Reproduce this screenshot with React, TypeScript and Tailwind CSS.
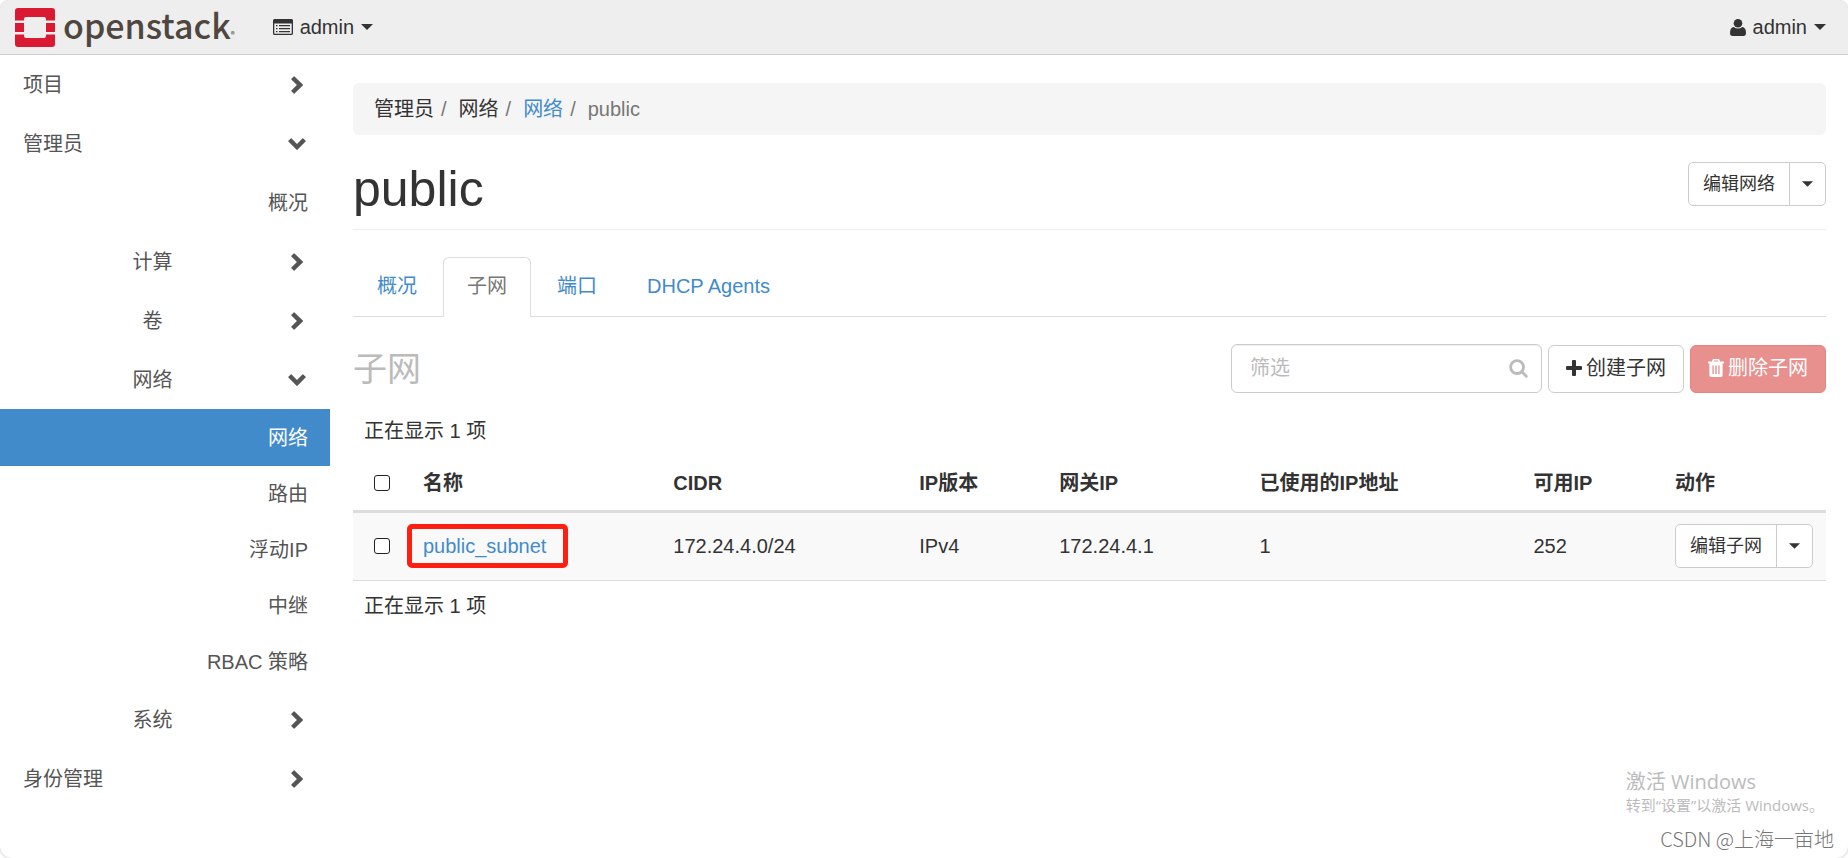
import { useState } from "react";
import type { ReactNode } from "react";
import clsx from "clsx";

const leaves = ["网络", "路由", "浮动IP", "中继", "RBAC 策略"];

const columns = ["名称", "CIDR", "IP版本", "网关IP", "已使用的IP地址", "可用IP", "动作"];

const tabs = ["概况", "子网", "端口", "DHCP Agents"];

function Caret({ className = "w-3" }: { className?: string }) {
  return (
    <svg viewBox="0 0 12 6" className={clsx("h-1.5 shrink-0", className)} fill="currentColor" aria-hidden="true">
      <path d="M0 0h12L6 6z" />
    </svg>
  );
}

function Chevron({ open }: { open: boolean }) {
  return (
    <svg
      viewBox="0 0 18 18"
      className={clsx("size-[18px] shrink-0", open && "rotate-90")}
      fill="currentColor"
      aria-hidden="true"
    >
      <path d="M3.400 2.800 5.700.4Q6.100 0 6.500.4L14.800 8.600Q15.200 9 14.800 9.400L6.500 17.600Q6.100 18 5.700 17.600L3.400 15.200Q3 14.800 3.400 14.400L8.900 9 3.400 3.600Q3 3.200 3.400 2.800z" />
    </svg>
  );
}

function Logo() {
  return (
    <svg viewBox="0 0 40 39" className="h-[39px] w-10 shrink-0" aria-hidden="true">
      <path fill="#da1a32" d="M3 0h34a3 3 0 0 1 3 3v9.500h-9V11a2 2 0 0 0-2-2H11a2 2 0 0 0-2 2v1.500H0V3a3 3 0 0 1 3-3z" />
      <path fill="#da1a32" d="M0 15h9v9H0zM31 15h9v9h-9z" />
      <path fill="#da1a32" d="M0 26.500h9V28a2 2 0 0 0 2 2h18a2 2 0 0 0 2-2v-1.500h9V36a3 3 0 0 1-3 3H3a3 3 0 0 1-3-3z" />
    </svg>
  );
}

function ListIcon() {
  return (
    <svg viewBox="0 0 20 16" className="h-4 w-5 shrink-0" aria-hidden="true">
      <path
        fill="currentColor"
        fillRule="evenodd"
        d="M1.500 0h17A1.500 1.500 0 0 1 20 1.500v13a1.500 1.500 0 0 1-1.500 1.500h-17A1.500 1.500 0 0 1 0 14.500v-13A1.500 1.500 0 0 1 1.500 0zM1.300 4.500v9.700q0 .5.5.5h16.400q.5 0 .5-.5V4.500z"
      />
      <path fill="currentColor" d="M3 6h1.500v1.200H3zM6 6h11v1.200H6zM3 9h1.500v1.200H3zM6 9h11v1.200H6zM3 12h1.500v1.200H3zM6 12h11v1.200H6z" />
    </svg>
  );
}

function UserIcon() {
  return (
    <svg viewBox="0 0 16 17" className="h-[17px] w-4 shrink-0" fill="currentColor" aria-hidden="true">
      <circle cx="8" cy="4.300" r="4.300" />
      <path d="M3.800 8Q5.500 9.600 8 9.600T12.200 8Q16 8.400 16 14q0 3-2.600 3H2.600Q0 17 0 14 0 8.400 3.800 8z" />
    </svg>
  );
}

function SearchIcon() {
  return (
    <svg viewBox="0 0 20 20" className="size-[19px]" fill="none" stroke="currentColor" strokeWidth="3" aria-hidden="true">
      <circle cx="8.500" cy="8.500" r="6.800" />
      <path d="m13.500 13.500 4.700 4.700" strokeLinecap="round" />
    </svg>
  );
}

function PlusIcon() {
  return (
    <svg viewBox="0 0 16 16" className="size-4 shrink-0" fill="currentColor" aria-hidden="true">
      <path d="M7 0h2q1 0 1 1v5h5q1 0 1 1v2q0 1-1 1h-5v5q0 1-1 1H7q-1 0-1-1v-5H1q-1 0-1-1V7q0-1 1-1h5V1q0-1 1-1z" />
    </svg>
  );
}

function TrashIcon() {
  return (
    <svg viewBox="0 0 16 18" className="h-[18px] w-4 shrink-0" fill="currentColor" aria-hidden="true">
      <path
        fillRule="evenodd"
        d="M5.500 0h5q.8 0 1 .8l.6 1.700H15.500q.5 0 .5.500v1q0 .5-.5.500H14.600V16q0 2-1.600 2H3q-1.600 0-1.600-2V4.500H.5Q0 4.500 0 4V3q0-.5.5-.5H3.900L4.500.8q.2-.8 1-.8zM5.700 2.500h4.600L9.900 1.400H6.100zM4.400 6.500v8.500h1.300V6.500zM7.300 6.500v8.500h1.400V6.500zM10.300 6.500v8.500h1.300V6.500z"
      />
    </svg>
  );
}

function NavPanel({
  label,
  nested,
  open = false,
  children
}: {
  label: string;
  nested?: boolean;
  open?: boolean;
  children?: ReactNode;
}) {
  const [isOpen, setIsOpen] = useState(open);

  return (
    <li>
      <button
        type="button"
        className="flex h-[59px] w-full items-center pr-6 pl-[23px]"
        aria-expanded={isOpen}
        onClick={() => setIsOpen(!isOpen)}
      >
        <span className={clsx("flex-1", nested ? "pr-1.5 text-center" : "text-left")}>{label}</span>
        <Chevron open={isOpen} />
      </button>
      {isOpen && children ? <ul>{children}</ul> : null}
    </li>
  );
}

function SplitButton({ label }: { label: string }) {
  return (
    <div className="inline-flex h-11 rounded-[5px] border border-[#cccccc] bg-white text-lg">
      <button type="button" className="px-3.5">
        {label}
      </button>
      <button type="button" className="border-l border-[#cccccc] px-3" aria-label={`${label} 更多`}>
        <Caret className="w-[11px]" />
      </button>
    </div>
  );
}

function RowCheckbox({ label }: { label: string }) {
  return (
    <input
      type="checkbox"
      aria-label={label}
      className="block size-4 appearance-none rounded-[3px] border border-[#222222] bg-white checked:bg-[#428bca]"
    />
  );
}

function SubnetTable() {
  return (
    <table className="w-full table-fixed border-collapse text-left">
      <caption className="caption-top pt-3.5 pb-[11px] pl-[11px] text-left">正在显示 1 项</caption>
      <colgroup>
        <col className="w-[4%]" />
        <col className="w-[17%]" />
        <col className="w-[16.7%]" />
        <col className="w-[9.5%]" />
        <col className="w-[13.6%]" />
        <col className="w-[18.6%]" />
        <col className="w-[9.6%]" />
        <col className="w-[11%]" />
      </colgroup>
      <thead>
        <tr className="h-[55px] border-b-3 border-[#dddddd]">
          <th className="pl-[21px]">
            <RowCheckbox label="全选" />
          </th>
          {columns.map((column) => (
            <th key={column} className="px-[11px] font-bold">
              {column}
            </th>
          ))}
        </tr>
      </thead>
      <tbody>
        <tr className="h-[69px] border-b border-[#dddddd] bg-[#f9f9f9]">
          <td className="pl-[21px]">
            <RowCheckbox label="public_subnet" />
          </td>
          <td className="px-[11px]">
            <span className="relative inline-block">
              <a href="#subnet" className="text-[#428bca]">
                public_subnet
              </a>
              <span className="pointer-events-none absolute -inset-y-2 -right-[22px] -left-4 rounded-[5px] border-5 border-[#ff1e10]" />
            </span>
          </td>
          <td className="px-[11px]">172.24.4.0/24</td>
          <td className="px-[11px]">IPv4</td>
          <td className="px-[11px]">172.24.4.1</td>
          <td className="px-[11px]">1</td>
          <td className="px-[11px]">252</td>
          <td className="px-[11px] whitespace-nowrap">
            <div className="flex">
              <SplitButton label="编辑子网" />
            </div>
          </td>
        </tr>
      </tbody>
      <tfoot>
        <tr>
          <td colSpan={8} className="h-[52px] pl-[11px]">
            正在显示 1 项
          </td>
        </tr>
      </tfoot>
    </table>
  );
}

export default function App() {
  const [filter, setFilter] = useState("");
  const [activeTab, setActiveTab] = useState("子网");

  return (
    <div className="relative min-h-screen rounded-xl bg-white font-['Liberation_Sans','Noto_Sans_CJK_SC',sans-serif] text-[20px] leading-7 text-[#333333] shadow-[0_0_3px_rgba(0,0,0,0.3)]">
      <header className="flex h-[55px] items-center rounded-t-xl border-b border-[#cccccc] bg-[#eeeeee] pr-[22px] pl-[15px]">
        <a href="#home" className="flex items-center gap-2">
          <Logo />
          <span className="flex items-end pb-1 font-['Noto_Sans_CJK_SC',sans-serif] text-[34px] leading-9 font-medium text-[#4f473f]">
            openstack<span className="text-[8px] leading-4">®</span>
          </span>
        </a>
        <button type="button" className="ml-[38px] flex items-center gap-[7px]">
          <ListIcon />
          admin
          <Caret />
        </button>
        <button type="button" className="ml-auto flex items-center gap-[7px]">
          <UserIcon />
          admin
          <Caret />
        </button>
      </header>

      <div className="flex">
        <nav className="w-[330px] shrink-0 text-[#555555]">
          <ul>
            <NavPanel label="项目" />
            <NavPanel label="管理员" open>
              <li>
                <a href="#overview" className="flex h-[59px] items-center justify-end pr-[22px]">
                  概况
                </a>
              </li>
              <NavPanel label="计算" nested />
              <NavPanel label="卷" nested />
              <NavPanel label="网络" nested open>
                {leaves.map((leaf, index) => (
                  <li key={leaf}>
                    <a
                      href={`#${leaf}`}
                      className={clsx(
                        "flex items-center justify-end pr-[22px]",
                        index === 0 ? "h-[57px] bg-[#428bca] text-white" : "h-14"
                      )}
                    >
                      {leaf}
                    </a>
                  </li>
                ))}
              </NavPanel>
              <NavPanel label="系统" nested />
            </NavPanel>
            <NavPanel label="身份管理" />
          </ul>
        </nav>

        <main className="min-w-0 flex-1 pt-7 pr-[22px] pl-[23px]">
          <ol className="flex h-[52px] items-center gap-[7px] rounded-md bg-[#f5f5f5] px-[21px]">
            <li>管理员</li>
            <li className="flex gap-3 before:text-[#777777] before:content-['/']">网络</li>
            <li className="flex gap-3 before:text-[#777777] before:content-['/']">
              <a href="#networks" className="text-[#428bca]">
                网络
              </a>
            </li>
            <li className="flex gap-3 text-[#777777] before:content-['/']">public</li>
          </ol>

          <div className="mt-[27px] flex h-[68px] items-start justify-between border-b border-[#eeeeee]">
            <h1 className="text-[50px] leading-[54px]">public</h1>
            <SplitButton label="编辑网络" />
          </div>

          <div className="mt-[27px] flex h-[60px] gap-0.5 border-b border-[#dddddd]" role="tablist">
            {tabs.map((tab) => (
              <button
                key={tab}
                type="button"
                role="tab"
                aria-selected={tab === activeTab}
                onClick={() => setActiveTab(tab)}
                className={clsx(
                  "-mb-px rounded-t-md border border-b-0 px-[23px] pb-[3px]",
                  tab === activeTab ? "border-[#dddddd] bg-white text-[#777777]" : "border-transparent text-[#428bca]"
                )}
              >
                {tab}
              </button>
            ))}
          </div>

          <div className="mt-[27px] flex items-center justify-between">
            <h2 className="text-[34px] leading-[48px] text-[#bbbbbb]">子网</h2>
            <div className="flex items-end gap-1.5">
              <div className="relative">
                <input
                  type="text"
                  aria-label="筛选"
                  placeholder="筛选"
                  value={filter}
                  onChange={(event) => setFilter(event.target.value)}
                  className="block h-[49px] w-[311px] rounded-md border border-[#cccccc] pr-12 pl-[18px] shadow-[inset_0_1px_1px_rgba(0,0,0,0.075)] placeholder:text-[#bbbbbb]"
                />
                <span className="pointer-events-none absolute top-[15px] right-3.5 text-[#bbbbbb]">
                  <SearchIcon />
                </span>
              </div>
              <button
                type="button"
                className="flex h-12 items-center gap-1 rounded-md border border-[#cccccc] px-[17px] pb-0.5"
              >
                <PlusIcon />
                创建子网
              </button>
              <button
                type="button"
                disabled
                className="flex h-12 items-center gap-1 rounded-md border border-[#e68482] bg-[#e8908e] px-[17px] pb-0.5 text-white"
              >
                <TrashIcon />
                删除子网
              </button>
            </div>
          </div>

          <div className="mt-2.5">
            <SubnetTable />
          </div>
        </main>
      </div>

      <div className="pointer-events-none absolute right-6 bottom-11 font-['Open_Sans','Noto_Sans_CJK_SC',sans-serif] text-[#bbbbbb]">
        <p className="text-[20px] leading-7">激活 Windows</p>
        <p className="text-[15px] leading-[18px]">转到“设置”以激活 Windows。</p>
      </div>
      <p className="pointer-events-none absolute right-3.5 bottom-[5px] font-['Noto_Sans_CJK_SC',sans-serif] text-[20px] font-light text-[#777777]">
        CSDN @上海一亩地
      </p>
    </div>
  );
}
